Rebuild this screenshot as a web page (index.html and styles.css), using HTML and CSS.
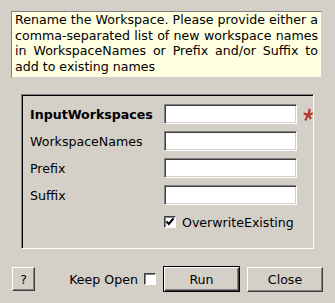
FILE: index.html
```html
<!DOCTYPE html>
<html>
<head>
  <title>RenameWorkspaces</title>
  <link rel="stylesheet" href="styles.css">
</head>
<body>
  <div class="description">
    Rename the Workspace. Please provide either a comma-separated list of new workspace names in WorkspaceNames or Prefix and/or Suffix to add to existing names
  </div>

  <div class="group">
    <div class="form-grid">
      <label class="field-label mandatory">InputWorkspaces</label>
      <span class="text-input"></span>
      <span class="star">
        <svg width="10" height="14" viewBox="0 0 10 14">
          <path d="M5.6 0.8 L7.8 1.3 L7 5.2 L9.6 4.3 L9.9 6.6 L7.2 7.2 L8.8 10.4 L6.9 11.7 L5.3 8.5 L3.2 13 L1.3 12 L3.4 7.4 L0.4 6.6 L0.9 4.5 L4.8 5.4 Z" fill="#b8342a"/>
        </svg>
      </span>

      <label class="field-label">WorkspaceNames</label>
      <span class="text-input"></span>
      <span></span>

      <label class="field-label">Prefix</label>
      <span class="text-input"></span>
      <span></span>

      <label class="field-label">Suffix</label>
      <span class="text-input"></span>
      <span></span>

      <span></span>
      <div class="check-row">
        <span class="checkbox">
          <svg width="10" height="10" viewBox="0 0 10 10">
            <path d="M1.5 4.5 L3.8 7 L8.5 1.5" fill="none" stroke="#000" stroke-width="2"/>
          </svg>
        </span>
        <span>OverwriteExisting</span>
      </div>
      <span></span>
    </div>
  </div>

  <div class="button-bar">
    <button class="btn help-btn">?</button>
    <div class="spacer"></div>
    <label class="keep-open">Keep Open <span class="checkbox"></span></label>
    <button class="btn run-btn">Run</button>
    <button class="btn close-btn">Close</button>
  </div>
</body>
</html>
```

FILE: styles.css
```css
body {
  background-color: #d4d0c8;
  font-family: "DejaVu Sans", sans-serif;
  font-size: 12.6px;
  color: #000;
  margin: 0;
  padding: 0;
}

.description {
  margin: 11px 13px 0 11px;
  padding: 0 3px 3px 3px;
  height: 62px;
  line-height: 15.7px;
  text-align: justify;
  background-color: #ffffe1;
  border-top: 1px solid #808080;
  border-left: 1px solid #808080;
  border-right: 1px solid #d4d0c8;
  border-bottom: 1px solid #d4d0c8;
}

.group {
  margin: 16px 21px 0 21px;
  height: 155px;
  padding: 9px 0 0 8px;
  border-top: 1px solid #808080;
  border-left: 1px solid #808080;
  border-right: 1px solid #fff;
  border-bottom: 1px solid #fff;
  box-shadow: inset 1px 1px 0 #000;
  box-sizing: border-box;
}

.form-grid {
  display: grid;
  grid-template-columns: 134px 133px 16px;
  grid-auto-rows: 20px;
  row-gap: 7px;
  align-items: center;
}

.field-label {
  white-space: nowrap;
}

.field-label.mandatory {
  font-weight: bold;
}

.text-input {
  display: block;
  height: 20px;
  box-sizing: border-box;
  background-color: #fff;
  border-top: 1px solid #808080;
  border-left: 1px solid #808080;
  border-right: 1px solid #fff;
  border-bottom: 1px solid #fff;
  box-shadow: inset 1px 1px 0 #404040, inset -1px -1px 0 #d4d0c8;
}

.star {
  display: flex;
  justify-content: flex-end;
  padding-right: 0;
  padding-top: 2px;
}

.check-row {
  display: flex;
  align-items: center;
  gap: 6px;
  grid-column: span 2;
}

.checkbox {
  display: inline-flex;
  align-items: center;
  justify-content: center;
  width: 12px;
  height: 12px;
  box-sizing: border-box;
  background-color: #fff;
  border-top: 1px solid #404040;
  border-left: 1px solid #404040;
  border-right: 1px solid #fff;
  border-bottom: 1px solid #fff;
  box-shadow: inset 1px 1px 0 #808080;
}

.button-bar {
  display: flex;
  align-items: center;
  margin-top: 17px;
  padding: 0 12px;
  height: 26px;
}

.spacer {
  flex: 1;
}

.keep-open {
  display: flex;
  align-items: center;
  gap: 6px;
}

.btn {
  font-family: "DejaVu Sans", sans-serif;
  font-size: 12.6px;
  color: #000;
  background-color: #d4d0c8;
  padding: 0;
  box-sizing: border-box;
  border-top: 1px solid #fff;
  border-left: 1px solid #fff;
  border-right: 1px solid #404040;
  border-bottom: 1px solid #404040;
  box-shadow: inset -1px -1px 0 #808080;
}

.help-btn {
  width: 23px;
  height: 24px;
}

.run-btn {
  width: 77px;
  height: 26px;
  margin-left: 7px;
  border: 1px solid #000;
  box-shadow: inset 1px 1px 0 #fff, inset -1px -1px 0 #404040, inset -2px -2px 0 #808080;
}

.close-btn {
  width: 76px;
  height: 25px;
  margin-left: 7px;
}
```
